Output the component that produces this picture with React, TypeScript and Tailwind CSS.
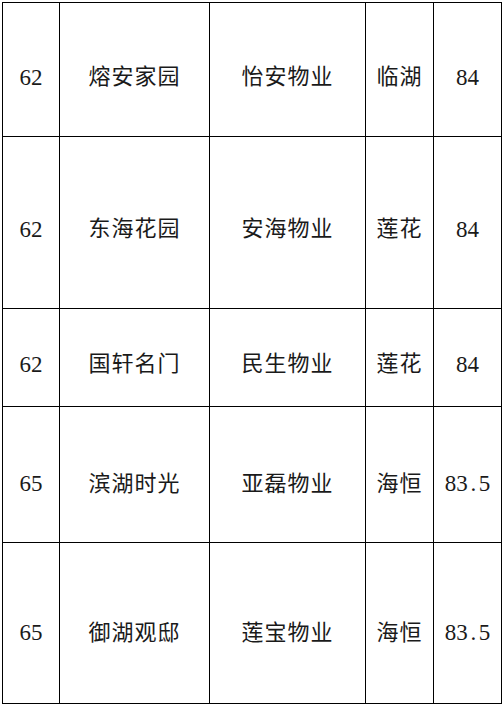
import React from 'react';

type Row = {
  rank: string;
  name: string;
  company: string;
  area: string;
  score: string;
  h: string;
  ptNum: string;
  ptCjk: string;
};

const rows: Row[] = [
  { rank: '62', name: '熔安家园', company: '怡安物业', area: '临湖', score: '84', h: 'h-[134px]', ptNum: 'pt-[16px]', ptCjk: 'pt-[9px]' },
  { rank: '62', name: '东海花园', company: '安海物业', area: '莲花', score: '84', h: 'h-[172px]', ptNum: 'pt-[13px]', ptCjk: 'pt-[6px]' },
  { rank: '62', name: '国轩名门', company: '民生物业', area: '莲花', score: '84', h: 'h-[98px]', ptNum: 'pt-[13px]', ptCjk: 'pt-[6px]' },
  { rank: '65', name: '滨湖时光', company: '亚磊物业', area: '海恒', score: '83.5', h: 'h-[136px]', ptNum: 'pt-[18px]', ptCjk: 'pt-[12px]' },
  { rank: '65', name: '御湖观邸', company: '莲宝物业', area: '海恒', score: '83.5', h: 'h-[161px]', ptNum: 'pt-[19px]', ptCjk: 'pt-[13px]' },
];

const cell = 'flex items-center justify-center border-r border-b border-black';
const num = "font-['Liberation_Serif',serif] text-[23px]";
const cjk = "font-['Noto_Sans_CJK_SC',sans-serif] text-[22px] tracking-[1px]";

// score keeps half-width dot like the source doc font
const Score = ({ value }: { value: string }) => {
  const [a, b] = value.split('.');
  if (b === undefined) return <>{value}</>;
  return (
    <>
      {a}
      <span className="inline-block w-[11px] text-center">.</span>
      {b}
    </>
  );
};

export default function App() {
  return (
    <div className="min-h-screen bg-white pl-[2px] pt-[2px] text-[#1a1a1a]">
      <div className="w-[500px] border-l border-t border-black leading-none">
        {rows.map((r, i) => (
          <div key={i} className={`flex ${r.h}`}>
            <div className={`${cell} ${r.ptNum} ${num} w-[57px]`}>{r.rank}</div>
            <div className={`${cell} ${r.ptCjk} ${cjk} w-[150px]`}>{r.name}</div>
            <div className={`${cell} ${r.ptCjk} ${cjk} w-[156px]`}>{r.company}</div>
            <div className={`${cell} ${r.ptCjk} ${cjk} w-[68px]`}>{r.area}</div>
            <div className={`${cell} ${r.ptNum} ${num} w-[68px]`}>
              <Score value={r.score} />
            </div>
          </div>
        ))}
      </div>
    </div>
  );
}
